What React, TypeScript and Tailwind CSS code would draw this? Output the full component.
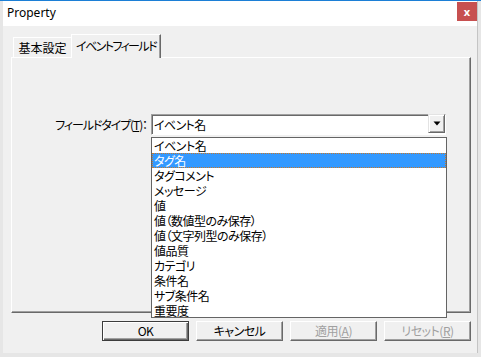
import React from "react";

const items = [
  "イベント名",
  "タグ名",
  "タグコメント",
  "メッセージ",
  "値",
  "値（数値型のみ保存）",
  "値（文字列型のみ保存）",
  "値品質",
  "カテゴリ",
  "条件名",
  "サブ条件名",
  "重要度",
];

const jp = "font-['Noto_Sans_CJK_JP',sans-serif] [font-feature-settings:'palt']";

const Btn = ({ children, def, disabled }: { children: React.ReactNode; def?: boolean; disabled?: boolean }) => (
  <div
    className={`w-[87px] h-[20px] flex items-center justify-center text-[12px] leading-none whitespace-nowrap tracking-[-0.5px] bg-[#f0f0f0] ${
      def
        ? "border border-[#3c3c3c] shadow-[inset_1px_1px_0_#ffffff,inset_-1px_-1px_0_#696969,inset_-2px_-2px_0_#a0a0a0]"
        : "border-t border-l border-white border-r border-b border-r-[#696969] border-b-[#696969] shadow-[inset_-1px_-1px_0_#a0a0a0]"
    } ${disabled ? "text-[#a0a0a0]" : "text-black"}`}
  >
    {children}
  </div>
);

export default function App() {
  return (
    <div className={`relative w-[481px] h-[357px] bg-[#e6e6e6] overflow-hidden ${jp}`}>
      <div className="h-px bg-[#1c7fd6]" />
      <div className="ml-[3px] w-[475px] h-[352px] bg-[#f0f0f0] border-r border-[#c4c4c4] flex flex-col">
        {/* title bar */}
        <div className="h-[25px] bg-white flex justify-between">
          <span className="pl-[4px] pt-[5px] text-[12px] leading-[14px] text-black font-['Noto_Sans',sans-serif]">
            Property
          </span>
          <div className="mt-[1px] w-[20px] h-[19px] bg-[#c75050] flex items-center justify-center text-white text-[11px] font-bold leading-none font-['Noto_Sans',sans-serif]">
            x
          </div>
        </div>

        {/* tabs */}
        <div className="mt-[8px] h-[23px] pl-[10px] flex items-end">
          <div className="w-[58px] h-[20px] border-t border-l border-white bg-[#f0f0f0] flex items-center justify-center text-[12px] leading-none pt-[1px] whitespace-nowrap">
            基本設定
          </div>
          <div className="relative z-10 -mb-px w-[90px] h-[24px] border-t border-l border-white border-r border-r-[#696969] shadow-[inset_-1px_0_0_#a0a0a0] bg-[#f0f0f0] flex justify-center pt-[4px] text-[12px] leading-[14px] whitespace-nowrap tracking-[-1.6px]">
            イベントフィールド
          </div>
        </div>

        {/* panel */}
        <div className="ml-[8px] w-[460px] h-[256px] border-t border-l border-white border-r border-b border-r-[#696969] border-b-[#696969] shadow-[inset_-1px_-1px_0_#a0a0a0]">
          <div className="mt-[56px] flex items-center">
            <div className="w-[139px] pr-[4px] text-right text-[12px] leading-none whitespace-nowrap tracking-[-1.1px]">
              フィールドタイプ(<span className="underline">T</span>)：
            </div>
            <div className="w-[295px] h-[21px] bg-white border-t border-l border-[#a0a0a0] border-r border-b border-r-white border-b-white shadow-[inset_1px_1px_0_#696969] flex">
              <div className="flex-1 pl-[2px] pt-[3px] text-[12px] leading-[14px] tracking-[-0.6px]">イベント名</div>
              <div className="w-[17px] h-full mt-[-1px] bg-[#f0f0f0] border-t border-l border-[#e3e3e3] border-r border-b border-r-[#696969] border-b-[#696969] shadow-[inset_1px_1px_0_#ffffff,inset_-1px_-1px_0_#a0a0a0] flex items-center justify-center">
                <svg width="8" height="5" viewBox="0 0 8 5">
                  <path d="M0.5 0.5 L7.5 0.5 L4 4.5 Z" fill="#000" />
                </svg>
              </div>
            </div>
          </div>
        </div>

        {/* buttons */}
        <div className="mt-[8px] pr-[6px] flex justify-end gap-[7px]">
          <Btn def>OK</Btn>
          <Btn>キャンセル</Btn>
          <Btn disabled>
            適用(<span className="underline">A</span>)
          </Btn>
          <Btn disabled>
            リセット(<span className="underline">R</span>)
          </Btn>
        </div>
      </div>

      {/* open dropdown list */}
      <div className="absolute left-[151px] top-[137px] w-[296px] h-[181px] bg-white border border-[#646464] z-20">
        {items.map((it, i) => (
          <div
            key={it}
            className={`h-[15px] pl-[2px] text-[12px] leading-[15px] whitespace-nowrap overflow-hidden tracking-[-0.5px] ${
              i === 1 ? "bg-[#3399ff] text-white outline outline-1 outline-dotted outline-offset-[-1px] outline-[#c8782a]" : "text-black"
            }`}
          >
            {it}
          </div>
        ))}
      </div>
    </div>
  );
}
